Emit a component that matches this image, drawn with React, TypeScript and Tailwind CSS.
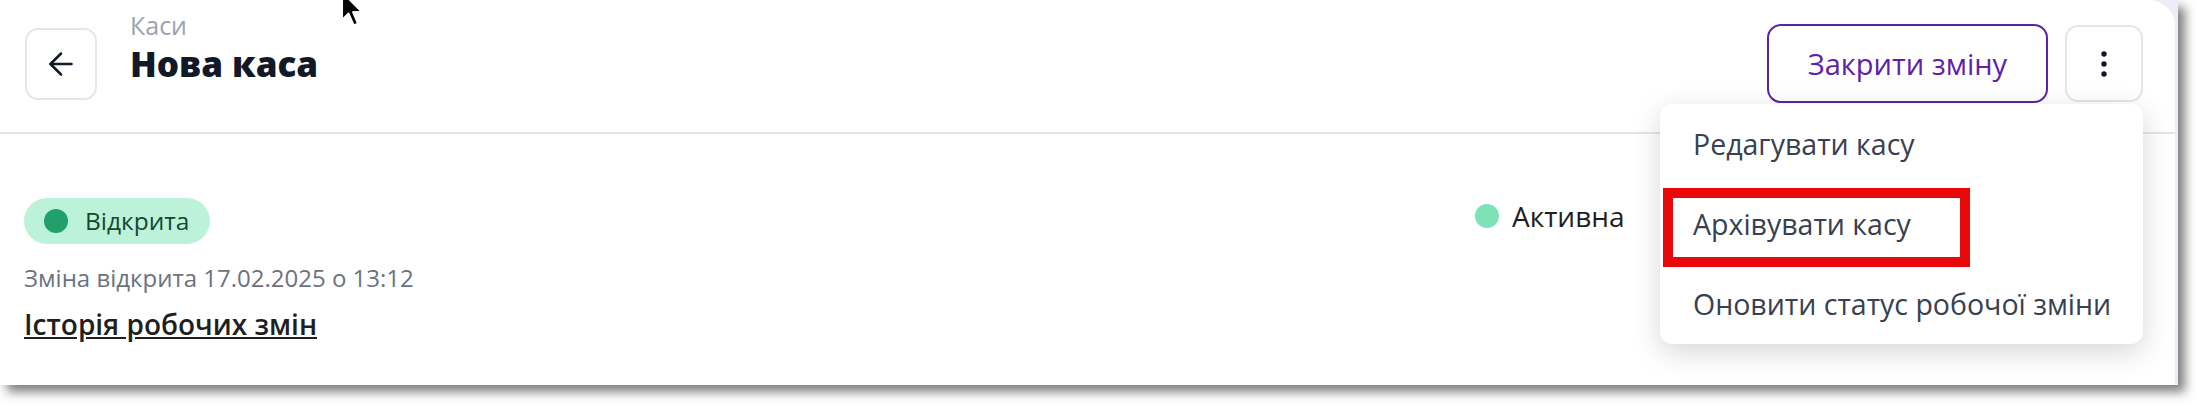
import { ArrowLeft } from "lucide-react";

const menuItems = ["Редагувати касу", "Архівувати касу", "Оновити статус робочої зміни"];

function Cursor() {
  return (
    <svg
      className="absolute left-[340px] top-[-10px] z-20"
      width="24"
      height="38"
      viewBox="0 0 13 21"
    >
      <path
        d="M1 1 L1 16.5 L4.6 13 L7.4 19.6 L9.8 18.6 L7.1 12.2 L12 12.2 Z"
        fill="#000"
        stroke="#fff"
        strokeWidth="1.1"
        strokeLinejoin="round"
      />
    </svg>
  );
}

export default function App() {
  return (
    <div className="relative w-[2198px] h-[406px] overflow-hidden bg-white font-['Open_Sans',sans-serif]">
      <Cursor />
      <div className="w-[2178px] h-[385px] bg-[#eeecf8] shadow-[7px_7px_10px_rgba(0,0,0,0.5)]">
        <div className="relative w-[2175px] h-full bg-white rounded-tr-[26px]">
          {/* Header */}
          <div className="h-[134px] border-b-2 border-[#e4e3ea] flex justify-between items-start pl-[25px] pr-[32px]">
            <div className="flex items-start">
              <button className="mt-[28px] w-[72px] h-[72px] rounded-[13px] border-2 border-[#e5e6eb] flex items-center justify-center text-[#111827]">
                <ArrowLeft size={36} strokeWidth={1.7} />
              </button>
              <div className="ml-[33px] mt-[10px]">
                <div className="text-[25px] leading-[31px] text-[#9ca3af]">Каси</div>
                <div className="mt-[2px] text-[35px] leading-[41px] font-extrabold text-[#111827]">
                  Нова каса
                </div>
              </div>
            </div>

            <div className="relative mt-[24px] flex items-start gap-[17px]">
              <button className="w-[281px] h-[79px] rounded-[14px] border-2 border-[#5e22a9] text-[#5e22a9] text-[29px] font-medium flex items-center justify-center">
                Закрити зміну
              </button>
              <button className="mt-[1px] w-[78px] h-[77px] rounded-[13px] border-2 border-[#e5e6eb] flex items-center justify-center">
                <svg width="8" height="28" viewBox="0 0 8 28" fill="#111827">
                  <circle cx="4" cy="4" r="2.7" />
                  <circle cx="4" cy="14" r="2.7" />
                  <circle cx="4" cy="24" r="2.7" />
                </svg>
              </button>

              {/* Dropdown */}
              <div className="absolute right-0 top-[80px] z-10 w-[483px] rounded-[12px] bg-white shadow-[0_8px_28px_rgba(0,0,0,0.16)]">
                {menuItems.map((item, i) => (
                  <div
                    key={item}
                    className="relative h-[80px] pl-[33px] flex items-center text-[28.5px] text-[#374151]"
                  >
                    {item}
                    {i === 1 && (
                      <div className="absolute left-[3px] top-[4px] w-[307px] h-[79px] border-[10px] border-[#e8080a]" />
                    )}
                  </div>
                ))}
              </div>
            </div>
          </div>

          {/* Body */}
          <div className="flex pl-[24px] pt-[64px]">
            <div className="w-[1451px]">
              <div className="inline-flex h-[46px] items-center rounded-full bg-[#bdf2da] pl-[20px] pr-[21px]">
                <span className="w-[24px] h-[24px] rounded-full bg-[#22a06b]" />
                <span className="ml-[17px] text-[24.5px] text-[#14492f]">Відкрита</span>
              </div>
              <div className="mt-[17px] text-[24px] leading-[34px] text-[#6b7280]">
                Зміна відкрита 17.02.2025 о 13:12
              </div>
              <div className="mt-[11px] text-[28px] leading-[36px] font-semibold underline text-[#1f1f1f]">
                Історія робочих змін
              </div>
            </div>
            <div className="flex h-[36px] items-center gap-[13px]">
              <span className="w-[24px] h-[24px] rounded-full bg-[#7ee2b8]" />
              <span className="text-[28px] text-[#1f1f1f]">Активна</span>
            </div>
          </div>
        </div>
      </div>
    </div>
  );
}
